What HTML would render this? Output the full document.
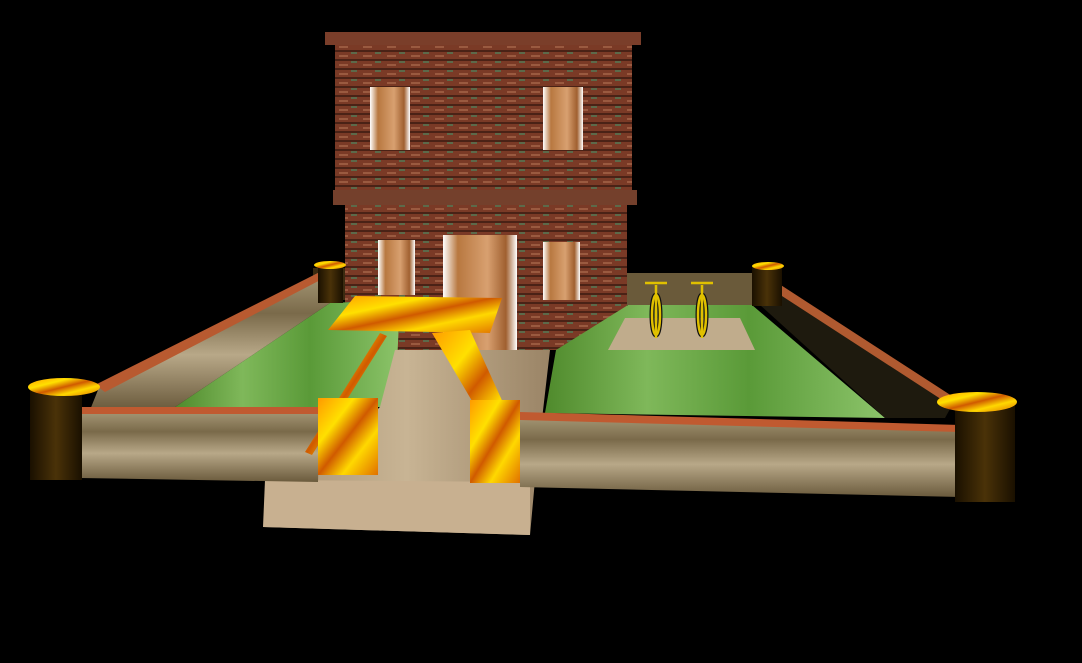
<!DOCTYPE html>
<html><head><meta charset="utf-8"><style>
html,body{margin:0;padding:0;background:#000;width:1082px;height:663px;overflow:hidden}
</style></head><body>
<svg width="1082" height="663" viewBox="0 0 1082 663" xmlns="http://www.w3.org/2000/svg">
<defs>
<linearGradient id="grass" x1="0" y1="0" x2="1" y2="0">
<stop offset="0" stop-color="#4f8a2c"/><stop offset=".3" stop-color="#7fb85a"/><stop offset=".6" stop-color="#5a9a38"/><stop offset="1" stop-color="#8cc46a"/></linearGradient>
<linearGradient id="wood" x1="0" y1="0" x2="0" y2="1">
<stop offset="0" stop-color="#a89a78"/><stop offset=".3" stop-color="#7a6a4a"/><stop offset=".6" stop-color="#b8a888"/><stop offset="1" stop-color="#6a5a3c"/></linearGradient>
<linearGradient id="path" x1="0" y1="0" x2="1" y2="0">
<stop offset="0" stop-color="#a89272"/><stop offset=".5" stop-color="#c8b494"/><stop offset="1" stop-color="#9a8466"/></linearGradient>
<pattern id="bp" width="24" height="9" patternUnits="userSpaceOnUse">
<rect width="24" height="9" fill="#7a3a26"/><rect y="5" width="24" height="2" fill="#4a2216"/><rect x="3" y="1" width="9" height="2" fill="#9a5a40"/><rect x="15" y="7" width="6" height="2" fill="#5c6a4a"/></pattern>
<linearGradient id="gold" x1="0" y1="0" x2="1" y2="1">
<stop offset="0" stop-color="#ff9a00"/><stop offset=".3" stop-color="#ffe000"/><stop offset=".5" stop-color="#d05a00"/><stop offset=".7" stop-color="#ffd800"/><stop offset="1" stop-color="#e07000"/></linearGradient>
<linearGradient id="win" x1="0" y1="0" x2="1" y2="0">
<stop offset="0" stop-color="#fff"/><stop offset=".2" stop-color="#b87840"/><stop offset=".6" stop-color="#d8a070"/><stop offset=".85" stop-color="#a06030"/><stop offset="1" stop-color="#fff"/></linearGradient>
<linearGradient id="pil" x1="0" y1="0" x2="1" y2="0">
<stop offset="0" stop-color="#1a1000"/><stop offset=".5" stop-color="#4a3208"/><stop offset="1" stop-color="#1a1000"/></linearGradient>
</defs>
<polygon points="313,268 345,268 345,300 313,300" fill="#3a2a10"/>
<polygon points="625,273 770,273 770,305 625,305" fill="#6a5a3a"/>
<rect x="325" y="32" width="316" height="13" fill="#7a3e2a"/>
<rect x="335" y="45" width="297" height="148" fill="url(#bp)"/>
<rect x="333" y="190" width="304" height="15" fill="#74402c"/>
<rect x="345" y="205" width="282" height="145" fill="url(#bp)"/>
<rect x="370" y="87" width="40" height="63" fill="url(#win)"/>
<rect x="543" y="87" width="40" height="63" fill="url(#win)"/>
<rect x="378" y="240" width="37" height="55" fill="url(#win)"/>
<rect x="543" y="242" width="37" height="58" fill="url(#win)"/>
<rect x="443" y="235" width="74" height="115" fill="url(#win)"/>
<polygon points="175,407 330,303 400,300 395,407" fill="url(#grass)"/>
<polygon points="545,413 556,350 628,305 752,305 885,418" fill="url(#grass)"/>
<polygon points="625,318 740,318 755,350 608,350" fill="#c0ac8c"/>
<polygon points="100,385 320,272 330,272 330,303 175,407 90,410" fill="url(#wood)"/>
<polygon points="95,385 320,272 330,275 105,392" fill="#b85a30"/>
<polygon points="770,280 955,400 945,418 885,418 760,305" fill="#1e1a0e"/>
<polygon points="770,278 955,398 950,405 765,285" fill="#b05a30"/>
<polygon points="395,350 550,350 535,480 530,535 263,527 300,480 380,407" fill="url(#path)"/>
<polygon points="265,480 530,482 530,535 263,527" fill="#c8b090"/>
<polygon points="75,410 320,410 318,482 80,478" fill="url(#wood)"/>
<polygon points="75,407 320,407 320,414 75,414" fill="#c05a30"/>
<polygon points="520,415 960,428 960,497 520,487" fill="url(#wood)"/>
<polygon points="520,412 960,425 960,432 520,420" fill="#c05a30"/>
<rect x="30" y="388" width="52" height="92" fill="url(#pil)"/>
<ellipse cx="64" cy="387" rx="36" ry="9" fill="url(#gold)"/>
<rect x="955" y="402" width="60" height="100" fill="url(#pil)"/>
<ellipse cx="977" cy="402" rx="40" ry="10" fill="url(#gold)"/>
<rect x="318" y="265" width="25" height="38" fill="url(#pil)"/>
<ellipse cx="330" cy="265" rx="16" ry="4" fill="url(#gold)"/>
<rect x="752" y="266" width="30" height="40" fill="url(#pil)"/>
<ellipse cx="768" cy="266" rx="16" ry="4" fill="url(#gold)"/>
<g stroke="#111" stroke-width="5" fill="none">
<ellipse cx="656" cy="315" rx="4" ry="20"/><ellipse cx="702" cy="315" rx="4" ry="20"/></g>
<g stroke="#e0c000" stroke-width="2.5" fill="none">
<line x1="656" y1="285" x2="656" y2="338"/><line x1="702" y1="285" x2="702" y2="338"/>
<line x1="645" y1="283" x2="667" y2="283"/><line x1="691" y1="283" x2="713" y2="283"/>
<ellipse cx="656" cy="315" rx="4" ry="20"/><ellipse cx="702" cy="315" rx="4" ry="20"/>
</g>
<polygon points="328,330 355,296 502,298 490,333" fill="url(#gold)"/>
<polygon points="380,333 387,336 312,455 305,452" fill="url(#gold)"/>
<polygon points="432,333 470,330 520,440 495,440" fill="url(#gold)"/>
<rect x="318" y="398" width="60" height="77" fill="url(#gold)"/>
<rect x="470" y="400" width="50" height="83" fill="url(#gold)"/>
</svg>
</body></html>
